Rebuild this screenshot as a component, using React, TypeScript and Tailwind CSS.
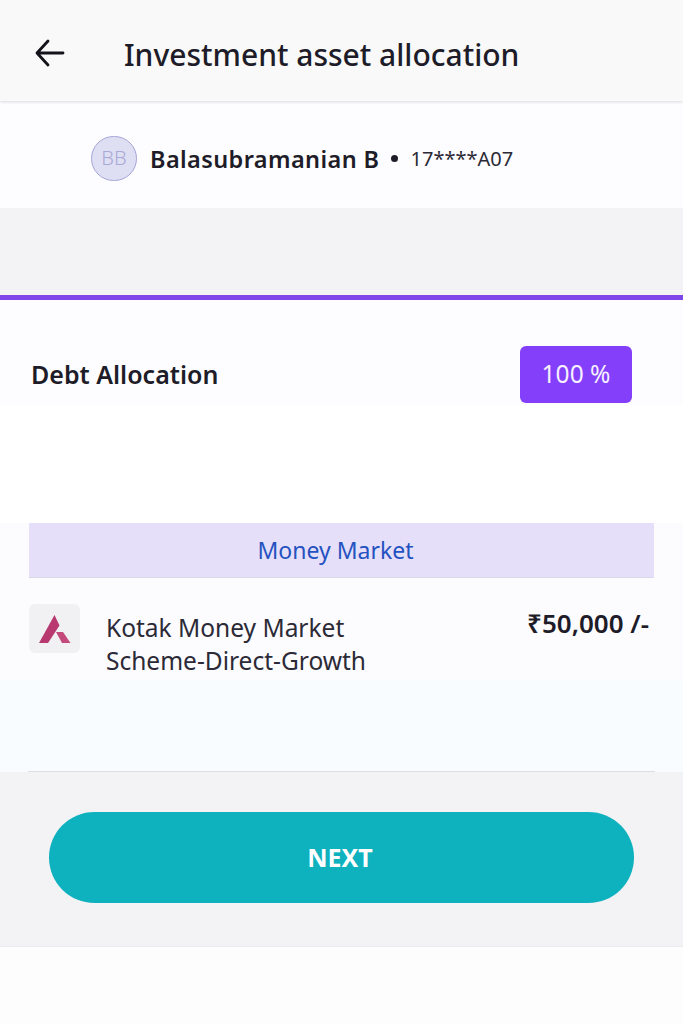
function AxisLogo() {
  return (
    <svg width="36" height="30" viewBox="0 0 36 30">
      <path d="M17.500 1 L22.500 11.500 L11 29 L2 29 Z" fill="#b8396f" />
      <path d="M19 18 L26 18 L33.500 29 L25 29 Z" fill="#c44a7c" />
    </svg>
  );
}

function App() {
  return (
    <div className="flex h-[1024px] w-[683px] flex-col overflow-hidden bg-[#fefdfe] font-['Noto_Sans',sans-serif] text-[#1d1c28]">
      <header className="relative z-10 flex h-[101px] shrink-0 items-center bg-[#f9f9f9] pt-[5px] shadow-[0_1px_3px_rgba(0,0,0,0.14)]">
        <svg className="ml-[35px]" width="30" height="28" viewBox="0 0 30 28" fill="none" stroke="#14131c" strokeWidth="2.800" strokeLinecap="round" strokeLinejoin="round">
          <path d="M2 14 H28 M13 2 L2 14 L13 26" />
        </svg>
        <h1 className="mt-[3px] ml-[59px] text-[30px] font-medium leading-none whitespace-nowrap">
          Investment asset allocation
        </h1>
      </header>

      <section className="flex h-[107px] shrink-0 items-center bg-[#fdfcfe] pt-[7px] pl-[91px]">
        <div className="flex h-[45px] w-[46px] items-center justify-center rounded-full border border-[#a5a6d8] bg-[#dfdff4] text-[20px] font-light text-[#a9a9d6]">
          BB
        </div>
        <span className="mt-[3px] ml-[13px] text-[23.500px] font-semibold tracking-[0.4px] whitespace-nowrap">Balasubramanian B</span>
        <span className="ml-[11px] h-[7px] w-[7px] rounded-full bg-[#1d1c28]" />
        <span className="mt-[2px] ml-[13px] text-[20px] text-[#2b2a36] whitespace-nowrap">17****A07</span>
      </section>

      <div className="h-[87px] shrink-0 bg-[#f3f2f5]" />
      <div className="h-[5px] shrink-0 bg-[#7f45e8]" />

      <section className="flex h-[105px] shrink-0 items-center justify-between bg-[#fdfcfe] pt-[44px] pr-[51px] pl-[31px]">
        <span className="text-[25px] font-semibold">Debt Allocation</span>
        <div className="flex h-[57px] w-[112px] items-center justify-center rounded-md bg-[#843ffa] text-[24.500px] text-[#f6f0ff]">
          100 %
        </div>
      </section>

      <div className="h-[118px] shrink-0 bg-white" />

      <section className="h-[157px] shrink-0 bg-[#fcfbfe] px-[29px]">
        <div className="flex h-[55px] items-center justify-center border-b border-[#dcd8ea] bg-[#e6dffa] pr-[12px] text-[23px] text-[#2452c0]">
          Money Market
        </div>
        <div className="mt-[26px] flex items-start">
          <div className="flex h-[49px] w-[51px] shrink-0 items-center justify-center rounded-md bg-[#f1f1f3]">
            <AxisLogo />
          </div>
          <div className="ml-[26px] pt-[7px] text-[24.500px] leading-[33px] text-[#2b2a36]">
            Kotak Money Market
            <br />
            Scheme-Direct-Growth
          </div>
          <div className="ml-auto mr-[5px] pt-[6px] text-[26px] font-semibold leading-none whitespace-nowrap">₹50,000 /-</div>
        </div>
      </section>

      <section className="h-[92px] shrink-0 bg-[#f8fcfe] px-[28px]">
        <div className="h-[92px] border-b border-[#dedde2]" />
      </section>

      <section className="flex h-[175px] shrink-0 items-start border-b border-[#ebeaee] bg-[#f3f2f5] pt-[40px] pl-[49px]">
        <button className="flex h-[91px] w-[585px] items-center justify-center rounded-full bg-[#0eb1be] pr-[3px] text-[25px] font-bold text-white">
          NEXT
        </button>
      </section>
    </div>
  );
}

export default App;
